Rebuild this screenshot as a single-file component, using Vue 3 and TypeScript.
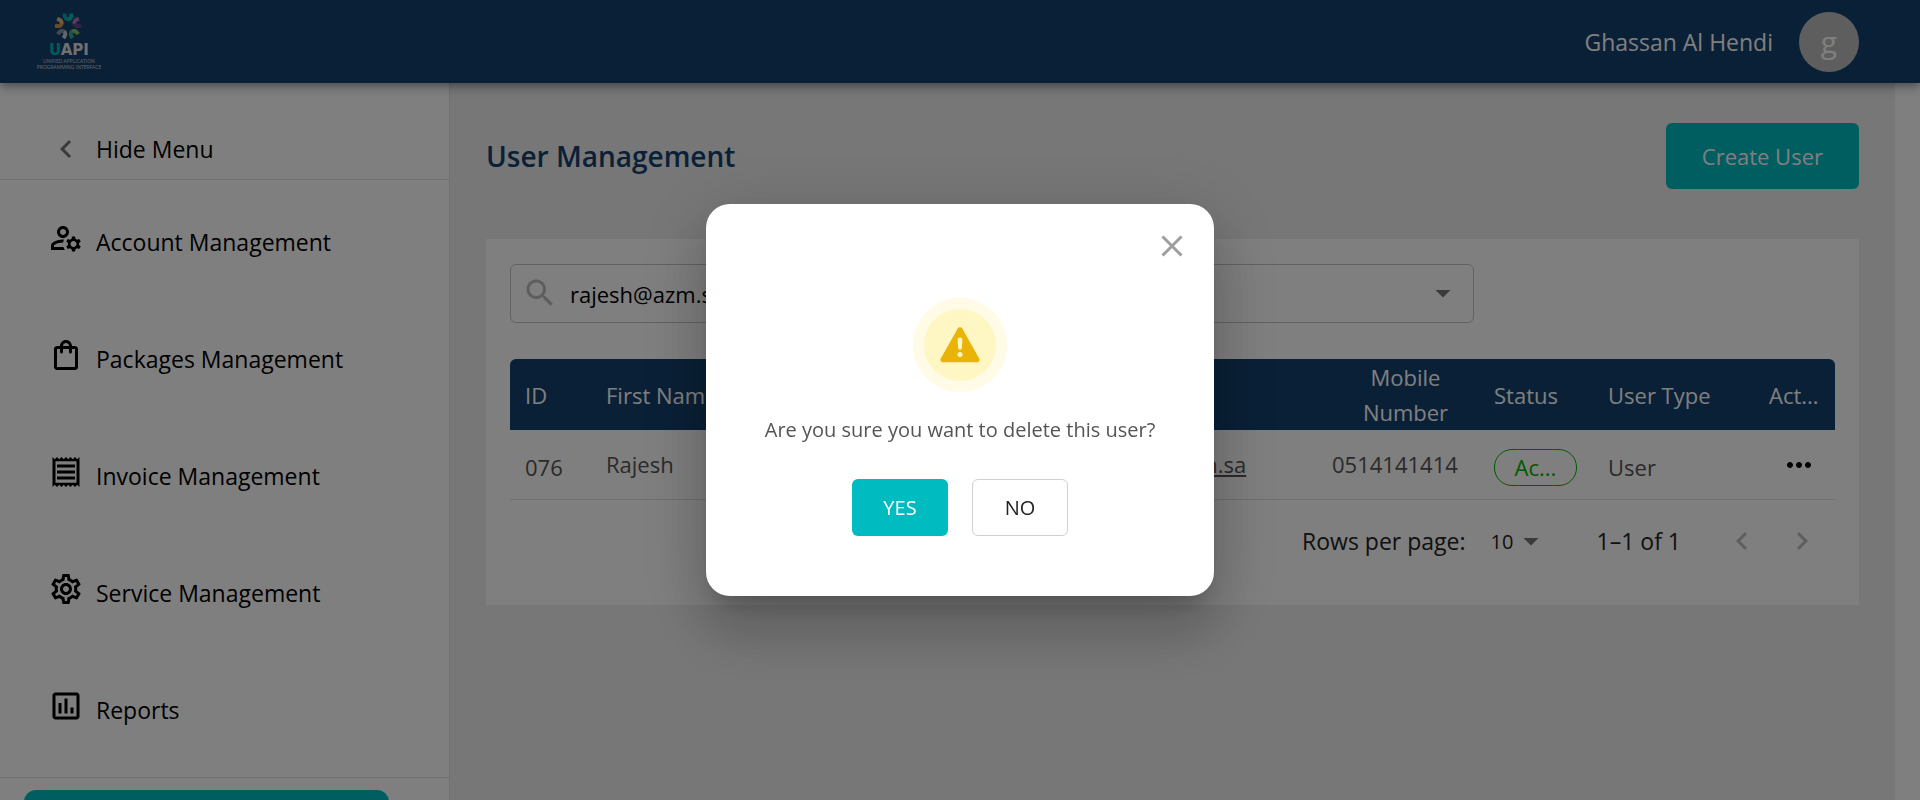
<script setup lang="ts">
import { ref } from 'vue'

interface MenuItem {
  label: string
  icon: string
}

interface UserRow {
  id: string
  firstName: string
  lastName: string
  email: string
  mobile: string
  status: string
  type: string
}

const menu: MenuItem[] = [
  {
    label: 'Account Management',
    icon: 'M4 18v-.65c0-.34.16-.66.41-.81C6.1 15.53 8.03 15 10 15c.03 0 .05 0 .08.01.1-.7.3-1.37.59-1.98-.22-.02-.44-.03-.67-.03-2.42 0-4.68.67-6.61 1.82-.88.52-1.39 1.5-1.39 2.53V20h9.26c-.42-.6-.75-1.28-.97-2H4zM10 12c2.21 0 4-1.79 4-4s-1.79-4-4-4-4 1.79-4 4 1.79 4 4 4zm0-6c1.1 0 2 .9 2 2s-.9 2-2 2-2-.9-2-2 .9-2 2-2zM20.75 16c0-.22-.03-.42-.06-.63l1.14-1.01-1-1.73-1.45.49c-.32-.27-.68-.48-1.08-.63L18 11h-2l-.3 1.49c-.4.15-.76.36-1.08.63l-1.45-.49-1 1.73 1.14 1.01c-.03.21-.06.41-.06.63s.03.42.06.63l-1.14 1.01 1 1.73 1.45-.49c.32.27.68.48 1.08.63L16 21h2l.3-1.49c.4-.15.76-.36 1.08-.63l1.45.49 1-1.73-1.14-1.01c.03-.21.06-.41.06-.63zM17 18c-1.1 0-2-.9-2-2s.9-2 2-2 2 .9 2 2-.9 2-2 2z',
  },
  {
    label: 'Packages Management',
    icon: 'M18 6h-2c0-2.21-1.79-4-4-4S8 3.79 8 6H6c-1.1 0-2 .9-2 2v12c0 1.1.9 2 2 2h12c1.1 0 2-.9 2-2V8c0-1.1-.9-2-2-2zm-6-2c1.1 0 2 .9 2 2h-4c0-1.1.9-2 2-2zm6 16H6V8h2v2c0 .55.45 1 1 1s1-.45 1-1V8h4v2c0 .55.45 1 1 1s1-.45 1-1V8h2v12z',
  },
  {
    label: 'Invoice Management',
    icon: 'M19.5 3.5L18 2l-1.5 1.5L15 2l-1.5 1.5L12 2l-1.5 1.5L9 2 7.5 3.5 6 2 4.5 3.5 3 2v20l1.5-1.5L6 22l1.5-1.5L9 22l1.5-1.5L12 22l1.5-1.5L15 22l1.5-1.5L18 22l1.5-1.5L21 22V2l-1.5 1.5zM19 19.09H5V4.91h14v14.18zM6 15h12v2H6zm0-4h12v2H6zm0-4h12v2H6z',
  },
  {
    label: 'Service Management',
    icon: 'M19.43 12.98c.04-.32.07-.64.07-.98 0-.34-.03-.66-.07-.98l2.11-1.65c.19-.15.24-.42.12-.64l-2-3.46c-.09-.16-.26-.25-.44-.25-.06 0-.12.01-.17.03l-2.49 1c-.52-.4-1.08-.73-1.69-.98l-.38-2.65C14.46 2.18 14.25 2 14 2h-4c-.25 0-.46.18-.49.42l-.38 2.65c-.61.25-1.17.59-1.69.98l-2.49-1c-.06-.02-.12-.03-.18-.03-.17 0-.34.09-.43.25l-2 3.46c-.13.22-.07.49.12.64l2.11 1.65c-.04.32-.07.65-.07.98 0 .33.03.66.07.98l-2.11 1.65c-.19.15-.24.42-.12.64l2 3.46c.09.16.26.25.44.25.06 0 .12-.01.17-.03l2.49-1c.52.4 1.08.73 1.69.98l.38 2.65c.03.24.24.42.49.42h4c.25 0 .46-.18.49-.42l.38-2.65c.61-.25 1.17-.59 1.69-.98l2.49 1c.06.02.12.03.18.03.17 0 .34-.09.43-.25l2-3.46c.12-.22.07-.49-.12-.64l-2.11-1.65zm-1.98-1.71c.04.31.05.52.05.73 0 .21-.02.43-.05.73l-.14 1.13.89.7 1.08.84-.7 1.21-1.27-.51-1.04-.42-.9.68c-.43.32-.84.56-1.25.73l-1.06.43-.16 1.13-.2 1.35h-1.4l-.19-1.35-.16-1.13-1.06-.43c-.43-.18-.83-.41-1.23-.71l-.91-.7-1.06.43-1.27.51-.7-1.21 1.08-.84.89-.7-.14-1.13c-.03-.31-.05-.54-.05-.74s.02-.43.05-.73l.14-1.13-.89-.7-1.08-.84.7-1.21 1.27.51 1.04.42.9-.68c.43-.32.84-.56 1.25-.73l1.06-.43.16-1.13.2-1.35h1.39l.19 1.35.16 1.13 1.06.43c.43.18.83.41 1.23.71l.91.7 1.06-.43 1.27-.51.7 1.21-1.07.85-.89.7.14 1.13zM12 8c-2.21 0-4 1.79-4 4s1.79 4 4 4 4-1.79 4-4-1.79-4-4-4zm0 6c-1.1 0-2-.9-2-2s.9-2 2-2 2 .9 2 2-.9 2-2 2z',
  },
  {
    label: 'Reports',
    icon: 'M9 17H7v-7h2v7zm4 0h-2V7h2v10zm4 0h-2v-4h2v4zm2 2H5V5h14v14zm0-16H5c-1.1 0-2 .9-2 2v14c0 1.1.9 2 2 2h14c1.1 0 2-.9 2-2V5c0-1.1-.9-2-2-2z',
  },
]

const chevronLeft = 'M15.41 7.41L14 6l-6 6 6 6 1.41-1.41L10.83 12z'
const chevronRight = 'M10 6L8.59 7.41 13.17 12l-4.58 4.59L10 18l6-6z'

const petals = [
  { angle: 0, start: '#00a89e', end: '#00bdb6' },
  { angle: 72, start: '#a878b4', end: '#6a4390' },
  { angle: 144, start: '#86bf66', end: '#3fa882' },
  { angle: 216, start: '#c2cfd4', end: '#8899a6' },
  { angle: 288, start: '#d79a4a', end: '#e6b878' },
]

const users: UserRow[] = [
  {
    id: '076',
    firstName: 'Rajesh',
    lastName: 'Kumar',
    email: 'rajesh@azm.sa',
    mobile: '0514141414',
    status: 'Ac...',
    type: 'User',
  },
]

const search = ref('rajesh@azm.sa')
const filter = ref('')
const pageSize = ref(10)
const confirmOpen = ref(true)
</script>

<template>
  <div class="page">
    <header class="topbar">
      <svg class="logo" viewBox="0 0 76 60" role="img" aria-label="UAPI">
        <g
          v-for="p in petals"
          :key="p.angle"
          fill="none"
          stroke-width="4"
          :transform="`translate(37 14) rotate(${p.angle})`"
        >
          <path d="M-3.4 -12.6V-11C-3.4 -8.4 -1.8 -6.800 0.1 -6.800" :stroke="p.start" />
          <path d="M3.4 -12.6V-11C3.4 -8.4 1.8 -6.800 0 -6.800" :stroke="p.end" />
        </g>
        <text class="word" x="38" y="43" text-anchor="middle"><tspan fill="#00b5b0">U</tspan>API</text>
        <text class="tag" x="38" y="51" text-anchor="middle">UNIFIED APPLICATION</text>
        <text class="tag" x="38" y="57" text-anchor="middle">PROGRAMMING INTERFACE</text>
      </svg>
      <div class="account">
        <span class="name">Ghassan Al Hendi</span>
        <span class="avatar">g</span>
      </div>
    </header>

    <div class="body">
      <nav class="sidebar" aria-label="Main menu">
        <button class="hide" type="button">
          <svg class="icon grey" viewBox="0 0 24 24"><path :d="chevronLeft" /></svg>
          <span>Hide Menu</span>
        </button>
        <ul class="menu">
          <li v-for="m in menu" :key="m.label">
            <a href="#" class="item">
              <svg class="icon" viewBox="0 0 24 24"><path :d="m.icon" /></svg>
              <span>{{ m.label }}</span>
            </a>
          </li>
        </ul>
        <div class="promo"></div>
      </nav>

      <main class="main">
        <div class="heading">
          <h1>User Management</h1>
          <button class="create" type="button">Create User</button>
        </div>

        <section class="card">
          <div class="filters">
            <label class="field">
              <svg class="icon light" viewBox="0 0 24 24">
                <path d="M15.5 14h-.79l-.28-.27C15.41 12.59 16 11.11 16 9.5 16 5.91 13.09 3 9.5 3S3 5.91 3 9.5 5.91 16 9.5 16c1.61 0 3.09-.59 4.23-1.57l.27.28v.79l5 4.99L20.49 19l-4.99-5zm-6 0C7.01 14 5 11.99 5 9.5S7.01 5 9.5 5 14 7.01 14 9.5 11.99 14 9.5 14z" />
              </svg>
              <input v-model="search" type="text" aria-label="Search users" />
            </label>
            <label class="field select">
              <select v-model="filter" aria-label="Filter by status">
                <option value=""></option>
                <option value="active">Active</option>
              </select>
              <svg class="icon grey" viewBox="0 0 24 24"><path d="M7 10l5 5 5-5z" /></svg>
            </label>
          </div>

          <table>
            <colgroup>
              <col class="c-id" />
              <col />
              <col />
              <col class="c-email" />
              <col class="c-mobile" />
              <col class="c-status" />
              <col class="c-type" />
              <col class="c-act" />
            </colgroup>
            <thead>
              <tr>
                <th>ID</th>
                <th>First Name</th>
                <th>Last Name</th>
                <th>Email</th>
                <th class="mobile">Mobile Number</th>
                <th>Status</th>
                <th>User Type</th>
                <th>Act...</th>
              </tr>
            </thead>
            <tbody>
              <tr v-for="u in users" :key="u.id">
                <td class="low">{{ u.id }}</td>
                <td>{{ u.firstName }}</td>
                <td>{{ u.lastName }}</td>
                <td><a class="mail" href="#">{{ u.email }}</a></td>
                <td>{{ u.mobile }}</td>
                <td class="low"><span class="chip">{{ u.status }}</span></td>
                <td class="low">{{ u.type }}</td>
                <td class="act">
                  <button class="plain" type="button" aria-label="Row actions">
                    <svg class="icon" viewBox="0 0 24 24">
                      <path d="M6 10c-1.100 0-2 .9-2 2s.9 2 2 2 2-.9 2-2-.9-2-2-2zm12 0c-1.100 0-2 .9-2 2s.9 2 2 2 2-.9 2-2-.9-2-2-2zm-6 0c-1.100 0-2 .9-2 2s.9 2 2 2 2-.9 2-2-.9-2-2-2z" />
                    </svg>
                  </button>
                </td>
              </tr>
            </tbody>
          </table>

          <div class="pager">
            <label for="page-size">Rows per page:</label>
            <span class="size select">
              <select id="page-size" v-model="pageSize">
                <option :value="10">10</option>
                <option :value="25">25</option>
              </select>
              <svg class="icon grey" viewBox="0 0 24 24"><path d="M7 10l5 5 5-5z" /></svg>
            </span>
            <span class="range">1–1 of 1</span>
            <button class="plain" type="button" aria-label="Previous page">
              <svg class="icon light" viewBox="0 0 24 24"><path :d="chevronLeft" /></svg>
            </button>
            <button class="plain" type="button" aria-label="Next page">
              <svg class="icon light" viewBox="0 0 24 24"><path :d="chevronRight" /></svg>
            </button>
          </div>
        </section>
      </main>
    </div>

    <div v-if="confirmOpen" class="overlay">
      <div class="dialog" role="dialog" aria-modal="true" aria-labelledby="confirm-text">
        <button class="plain close" type="button" aria-label="Close" @click="confirmOpen = false">
          <svg viewBox="0 0 24 24"><path d="M2.500 2.500l19 19M21.500 2.500l-19 19" /></svg>
        </button>
        <div class="warning">
          <svg viewBox="0 0 40 36" aria-hidden="true">
            <path class="tri" d="M17.600 1.700a2.800 2.800 0 0 1 4.800 0L39.200 31.500a2.400 2.400 0 0 1-2.100 3.700H2.900A2.400 2.400 0 0 1 .8 31.500z" />
            <path class="mark" d="M20 10.500c1.500 0 2.500 1 2.400 2.400l-.6 8c-.1 1-.9 1.700-1.800 1.700s-1.700-.7-1.800-1.700l-.6-8c-.1-1.400.9-2.400 2.400-2.400z" />
            <circle class="mark" cx="20" cy="27.500" r="2.500" />
          </svg>
        </div>
        <p id="confirm-text">Are you sure you want to delete this user?</p>
        <div class="actions">
          <button class="yes" type="button" @click="confirmOpen = false">YES</button>
          <button class="no" type="button" @click="confirmOpen = false">NO</button>
        </div>
      </div>
    </div>
  </div>
</template>

<style>
body {
  background: #fff;
}
</style>

<style scoped>
.page,
.page * {
  box-sizing: border-box;
}
.page {
  display: flex;
  flex-direction: column;
  height: 100vh;
  overflow: hidden;
  font-family: 'Open Sans', 'Noto Sans', sans-serif;
  font-size: 23px;
  line-height: 35px;
  color: #000;
}
button,
input,
select {
  font: inherit;
  color: inherit;
  margin: 0;
}
.icon {
  display: block;
  flex: none;
  width: 36px;
  height: 36px;
  fill: #000;
}
.icon.grey {
  fill: #757575;
}
.icon.light {
  fill: #bdbdbd;
}
.plain {
  padding: 0;
  border: 0;
  background: none;
}

.topbar {
  position: relative;
  z-index: 1;
  display: flex;
  flex: none;
  align-items: center;
  justify-content: space-between;
  height: 83px;
  padding: 0 61px 0 31px;
  background: #14406e;
  color: #fff;
  box-shadow: 0 3px 6px -1px rgba(0, 0, 0, 0.2), 0 6px 8px 0 rgba(0, 0, 0, 0.14),
    0 2px 15px 0 rgba(0, 0, 0, 0.12);
}
.logo {
  width: 76px;
  height: 60px;
}
.word {
  font: 700 15px 'DejaVu Sans', sans-serif;
  fill: #e0e0e0;
}
.tag {
  font: 5px 'Open Sans', sans-serif;
  fill: #c8d0d8;
}
.account {
  display: flex;
  align-items: center;
  gap: 26px;
}
.name {
  padding-top: 2px;
}
.avatar {
  display: flex;
  align-items: center;
  justify-content: center;
  width: 60px;
  height: 60px;
  border-radius: 50%;
  background: #bdbdbd;
  font-size: 30px;
}

.body {
  display: flex;
  flex: 1;
  min-height: 0;
}
.sidebar {
  flex: none;
  width: 450px;
  border-right: 1px solid #e0e0e0;
  overflow: hidden;
}
.hide {
  display: flex;
  align-items: center;
  gap: 12px;
  width: 100%;
  height: 97px;
  padding: 36px 48px 0;
  border: 0;
  border-bottom: 1px solid #e0e0e0;
  background: none;
}
.menu {
  margin: 0;
  padding: 0 0 12px;
  list-style: none;
  border-bottom: 1px solid #e0e0e0;
}
.item {
  display: flex;
  align-items: center;
  gap: 12px;
  height: 117px;
  padding: 0 48px 2px;
  color: inherit;
  text-decoration: none;
}
.item span {
  padding-top: 9px;
}
.promo {
  height: 120px;
  margin: 12px 60px 0 24px;
  border-radius: 12px;
  background: #00bbc0;
}

.main {
  flex: 1;
  min-width: 0;
  margin-right: 25px;
  padding: 40px 36px;
  background: #eee;
}
.heading {
  display: flex;
  align-items: center;
  justify-content: space-between;
  margin-bottom: 50px;
}
h1 {
  margin: 0;
  font-size: 28px;
  font-weight: 600;
  color: #14406e;
}
.create {
  height: 66px;
  padding: 0 36px;
  border: 0;
  border-radius: 6px;
  background: #00bbc0;
  color: #fff;
  font-size: 22px;
}
.card {
  padding: 25px 24px 23px;
  background: #fff;
}
.filters {
  display: grid;
  grid-template-columns: 1fr 1fr;
  gap: 16px;
  margin: 0 361px 36px 0;
}
.field {
  display: flex;
  align-items: center;
  height: 59px;
  padding: 0 12px 2px 11px;
  border: 1px solid #c4c4c4;
  border-radius: 6px;
  font-size: 22px;
}
.field input {
  flex: 1;
  min-width: 0;
  padding: 3px 0 0 12px;
  border: 0;
  outline: 0;
  background: none;
}
.select {
  display: grid;
  align-items: center;
}
.select select,
.select svg {
  grid-area: 1 / 1;
}
.select select {
  width: 100%;
  height: 36px;
  padding: 0;
  border: 0;
  outline: 0;
  appearance: none;
  background: none;
}
.select svg {
  justify-self: end;
  pointer-events: none;
}

table {
  width: 100%;
  table-layout: fixed;
  border-spacing: 0;
}
.c-id,
.c-act {
  width: 81px;
}
.c-email {
  width: 237px;
}
.c-mobile {
  width: 162px;
}
.c-status {
  width: 114px;
}
.c-type {
  width: 161px;
}
th {
  height: 71px;
  padding: 1px 0 0 15px;
  background: #14406e;
  color: #fff;
  font-size: 22px;
  font-weight: 400;
  text-align: left;
}
th:first-child {
  border-top-left-radius: 6px;
}
th:last-child {
  border-top-right-radius: 6px;
}
th.mobile {
  padding: 0 15px 0 30px;
  text-align: center;
}
td {
  height: 70px;
  padding: 0 0 0 15px;
  border-bottom: 1px solid #e0e0e0;
  color: #555;
  font-size: 22px;
}
td.low {
  padding-top: 5px;
}
td:nth-child(4) {
  padding-left: 12px;
}
.mail {
  color: inherit;
}
.chip {
  display: block;
  width: 83px;
  height: 37px;
  border: 1px solid #00b400;
  border-radius: 18px;
  color: #00b400;
  text-align: center;
}
td.act {
  padding-right: 18px;
}
.act .plain {
  display: block;
  margin-left: auto;
}

.pager {
  display: flex;
  align-items: center;
  justify-content: flex-end;
  height: 82px;
  padding-right: 15px;
  color: #222;
}
.size {
  width: 58px;
  margin-left: 25px;
  font-size: 20px;
}
.range {
  margin: 0 43px 0 48px;
}
.pager .plain + .plain {
  margin-left: 24px;
}

.overlay {
  position: fixed;
  inset: 0;
  z-index: 2;
  display: flex;
  align-items: center;
  justify-content: center;
  background: rgba(0, 0, 0, 0.5);
}
.dialog {
  display: flex;
  flex-direction: column;
  align-items: center;
  width: 508px;
  padding: 30px 30px 60px;
  border-radius: 24px;
  background: #fff;
  box-shadow: 0 16px 22px -10px rgba(0, 0, 0, 0.2), 0 36px 57px 4px rgba(0, 0, 0, 0.14),
    0 14px 69px 12px rgba(0, 0, 0, 0.12);
}
.close {
  align-self: flex-end;
  height: 24px;
}
.close svg {
  display: block;
  width: 24px;
  height: 24px;
  fill: none;
  stroke: #9e9e9e;
  stroke-width: 3;
}
.warning {
  display: flex;
  align-items: center;
  justify-content: center;
  width: 94px;
  height: 94px;
  margin-top: 40px;
  border: 11px solid #fffbe6;
  border-radius: 50%;
  background: #fef7c3;
}
.warning svg {
  width: 40px;
  height: 36px;
}
.tri {
  fill: #eab308;
}
.mark {
  fill: #fef7c3;
}
.dialog p {
  margin: 20px 0 32px;
  font-size: 20px;
  color: #555;
}
.actions {
  display: flex;
  gap: 24px;
}
.actions button {
  width: 96px;
  height: 57px;
  border: 0;
  border-radius: 6px;
  font-size: 20px;
}
.yes {
  background: #00bbc0;
  color: #fff;
}
.actions .no {
  border: 1px solid #d0d0d0;
  background: #fff;
  color: #222;
}
</style>
